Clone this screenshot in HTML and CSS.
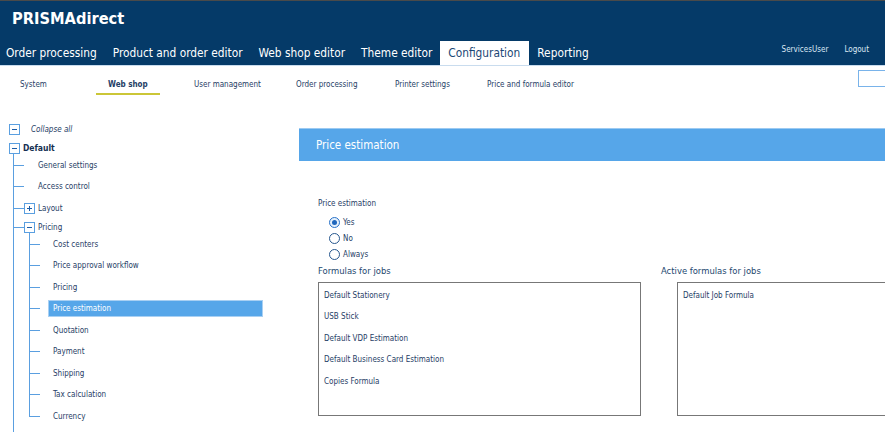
FILE: index.html
```html
<!DOCTYPE html>
<html>
<head>
<meta charset="utf-8">
<link rel="stylesheet" href="styles.css">
</head>
<body>
<div class="topline"></div>
<header class="header">
  <div class="brand">PRISMAdirect</div>
  <div class="navrow">
    <nav class="tabs">
      <a class="tab">Order processing</a>
      <a class="tab">Product and order editor</a>
      <a class="tab">Web shop editor</a>
      <a class="tab">Theme editor</a>
      <a class="tab active">Configuration</a>
      <a class="tab">Reporting</a>
    </nav>
    <div class="user">
      <a>ServicesUser</a>
      <a>Logout</a>
    </div>
  </div>
</header>
<div class="subbar">
  <nav class="subnav">
    <a class="subitem"><span>System</span></a>
    <a class="subitem active"><span>Web shop</span></a>
    <a class="subitem"><span>User management</span></a>
    <a class="subitem"><span>Order processing</span></a>
    <a class="subitem"><span>Printer settings</span></a>
    <a class="subitem"><span>Price and formula editor</span></a>
  </nav>
  <div class="search"></div>
</div>
<main class="main">
  <aside class="sidebar">
    <div class="row root collapse"><span class="box minus"></span><span class="lbl">Collapse all</span></div>
    <div class="row root default"><span class="box minus"></span><span class="lbl">Default</span></div>
    <ul class="l1">
      <li class="leaf">General settings</li>
      <li class="leaf">Access control</li>
      <li class="folder"><span class="box plus"></span><span class="lbl">Layout</span></li>
      <li class="folder"><span class="box minus"></span><span class="lbl">Pricing</span></li>
      <li class="sub">
        <ul class="l2">
          <li class="leaf">Cost centers</li>
          <li class="leaf">Price approval workflow</li>
          <li class="leaf">Pricing</li>
          <li class="leaf selected"><span class="sel">Price estimation</span></li>
          <li class="leaf">Quotation</li>
          <li class="leaf">Payment</li>
          <li class="leaf">Shipping</li>
          <li class="leaf">Tax calculation</li>
          <li class="leaf">Currency</li>
        </ul>
      </li>
    </ul>
  </aside>
  <section class="content">
    <div class="panel-head">Price estimation</div>
    <div class="form">
      <div class="field-label">Price estimation</div>
      <div class="radios">
        <label class="radio"><span class="circle checked"></span>Yes</label>
        <label class="radio"><span class="circle"></span>No</label>
        <label class="radio"><span class="circle"></span>Always</label>
      </div>
      <div class="lists">
        <div class="list-col">
          <div class="list-title">Formulas for jobs</div>
          <div class="listbox">
            <div class="item">Default Stationery</div>
            <div class="item">USB Stick</div>
            <div class="item">Default VDP Estimation</div>
            <div class="item">Default Business Card Estimation</div>
            <div class="item">Copies Formula</div>
          </div>
        </div>
        <div class="list-col right">
          <div class="list-title">Active formulas for jobs</div>
          <div class="listbox">
            <div class="item">Default Job Formula</div>
          </div>
        </div>
      </div>
    </div>
  </section>
</main>
</body>
</html>
```
FILE: styles.css
```css
* { box-sizing: border-box; }
html, body { margin: 0; padding: 0; }
body {
  width: 885px;
  height: 432px;
  overflow: hidden;
  background: #fff;
  font-family: "DejaVu Sans Condensed", "DejaVu Sans", sans-serif;
  color: #1f3e66;
}
a { text-decoration: none; color: inherit; }
ul { list-style: none; margin: 0; padding: 0; }

.topline { height: 1px; background: #4a4a4a; }

.header {
  background: #053a68;
  height: 65px;
  border-bottom: 1px solid #c9dcee;
}
.brand {
  height: 40px;
  padding: 8px 0 0 12px;
  font-weight: bold;
  font-size: 16.3px;
  line-height: 20px;
  color: #fff;
}
.navrow {
  height: 24px;
  display: flex;
  align-items: stretch;
}
.tabs {
  display: flex;
  margin-left: -2px;
}
.tab {
  padding: 0 8px;
  font-size: 11.8px;
  line-height: 24px;
  color: #fff;
}
.tab.active {
  background: #fff;
  color: #1b4775;
  padding-right: 9px;
}
.user {
  margin-left: auto;
  display: flex;
  gap: 16px;
  padding-right: 16px;
  font-size: 8px;
  line-height: 12px;
  color: #dce8f4;
  margin-top: -6px;
  align-self: center;
}

.subbar {
  height: 28px;
  display: flex;
  align-items: flex-start;
}
.subnav {
  margin-left: 8px;
  padding-top: 6px;
  display: grid;
  grid-template-columns: 88px 86px 102px 99px 92px auto;
}
.subitem span {
  display: inline-block;
  padding: 0 12px;
  font-size: 8px;
  line-height: 16px;
  height: 18px;
  color: #1f3e66;
  border-bottom: 2px solid transparent;
}
.subitem.active span {
  font-weight: bold;
  border-bottom-color: #cbc637;
}
.search {
  margin-left: auto;
  margin-top: 4px;
  width: 27px;
  height: 17px;
  border: 1px solid #79b3ea;
  border-right: none;
}

.main {
  display: flex;
}
.sidebar {
  width: 299px;
  flex: none;
  padding-top: 25.5px;
  font-size: 8px;
  color: #1f3e66;
}
.row {
  height: 19px;
  display: flex;
  align-items: center;
  padding-left: 9px;
}
.box {
  position: relative;
  width: 11px;
  height: 11px;
  border: 1px solid #5a9fe0;
  background: #fff;
  flex: none;
}
.box::before {
  content: "";
  position: absolute;
  left: 2px;
  top: 4px;
  width: 5px;
  height: 1px;
  background: #1c5ca6;
}
.box.plus::after {
  content: "";
  position: absolute;
  left: 4px;
  top: 2px;
  width: 1px;
  height: 5px;
  background: #1c5ca6;
}
.collapse .lbl { margin-left: 11px; font-style: italic; }
.default .lbl { margin-left: 3px; font-weight: bold; font-size: 8.5px; color: #142f52; }

.l1 {
  position: relative;
  margin-top: -2px;
}
.l1::before {
  content: "";
  position: absolute;
  left: 13px;
  top: -3px;
  bottom: -20px;
  width: 1px;
  background: #5a9fe0;
}
.l1 > li { position: relative; }
.l1 > li.leaf {
  height: 21.5px;
  line-height: 19px;
  padding-left: 38px;
}
.l1 > li.leaf::after,
.l1 > li.folder::after {
  content: "";
  position: absolute;
  left: 13px;
  top: 9px;
  width: 11px;
  height: 1px;
  background: #5a9fe0;
}
.l1 > li.folder {
  height: 19px;
  display: flex;
  align-items: center;
  padding-left: 24px;
}
.l1 > li.folder::after { width: 12px; }
.folder .lbl { margin-left: 3px; }

.l2 {
  position: relative;
  margin-top: -2px;
}
.l2::before {
  content: "";
  position: absolute;
  left: 29px;
  top: -3px;
  bottom: 12px;
  width: 1px;
  background: #5a9fe0;
}
.l2 > li {
  position: relative;
  height: 21.5px;
  line-height: 19px;
  padding-left: 53px;
}
.l2 > li::after {
  content: "";
  position: absolute;
  left: 29px;
  top: 9px;
  width: 11px;
  height: 1px;
  background: #5a9fe0;
}
.l2 > li.selected { padding-left: 49px; padding-top: 2px; }
.sel {
  display: block;
  width: 213px;
  height: 15px;
  line-height: 15px;
  padding-left: 4px;
  background: #56a6e9;
  color: #fff;
  box-shadow: 0 0 0 1px #a9d0f3;
}

.content {
  flex: 1;
  min-width: 0;
  padding-top: 34px;
}
.panel-head {
  height: 33px;
  background: #56a6e9;
  color: #fff;
  font-size: 11.5px;
  line-height: 33px;
  padding-left: 17px;
  border-top: 1px solid #9ccaf2;
}
.form {
  padding-left: 19px;
  font-size: 8px;
}
.field-label {
  margin-top: 37px;
  line-height: 12px;
  color: #1f3e66;
}
.radios {
  margin-top: 4px;
}
.radio {
  display: flex;
  align-items: center;
  height: 16px;
  padding-left: 11px;
  gap: 3px;
}
.circle {
  width: 11px;
  height: 11px;
  border-radius: 50%;
  border: 1px solid #27578e;
  background: #fff;
  position: relative;
}
.circle.checked {
  border-color: #2a73c9;
  background: #e6f1fc;
}
.circle.checked::after {
  content: "";
  position: absolute;
  left: 2px;
  top: 2px;
  width: 5px;
  height: 5px;
  border-radius: 50%;
  background: #1f67bd;
}
.lists {
  display: grid;
  grid-template-columns: 323px 224px;
  gap: 20px;
  margin-top: 3px;
}
.list-title {
  font-size: 9.4px;
  line-height: 12px;
  color: #24486f;
}
.listbox {
  margin-top: 5px;
  width: 323px;
  height: 134px;
  border: 1px solid #777;
  padding: 1.5px 0 0 5px;
}
.right .listbox {
  margin-left: 16px;
  width: 208px;
  border-right: none;
}
.item {
  height: 21.5px;
  line-height: 21.5px;
  color: #1f3e66;
}
```
